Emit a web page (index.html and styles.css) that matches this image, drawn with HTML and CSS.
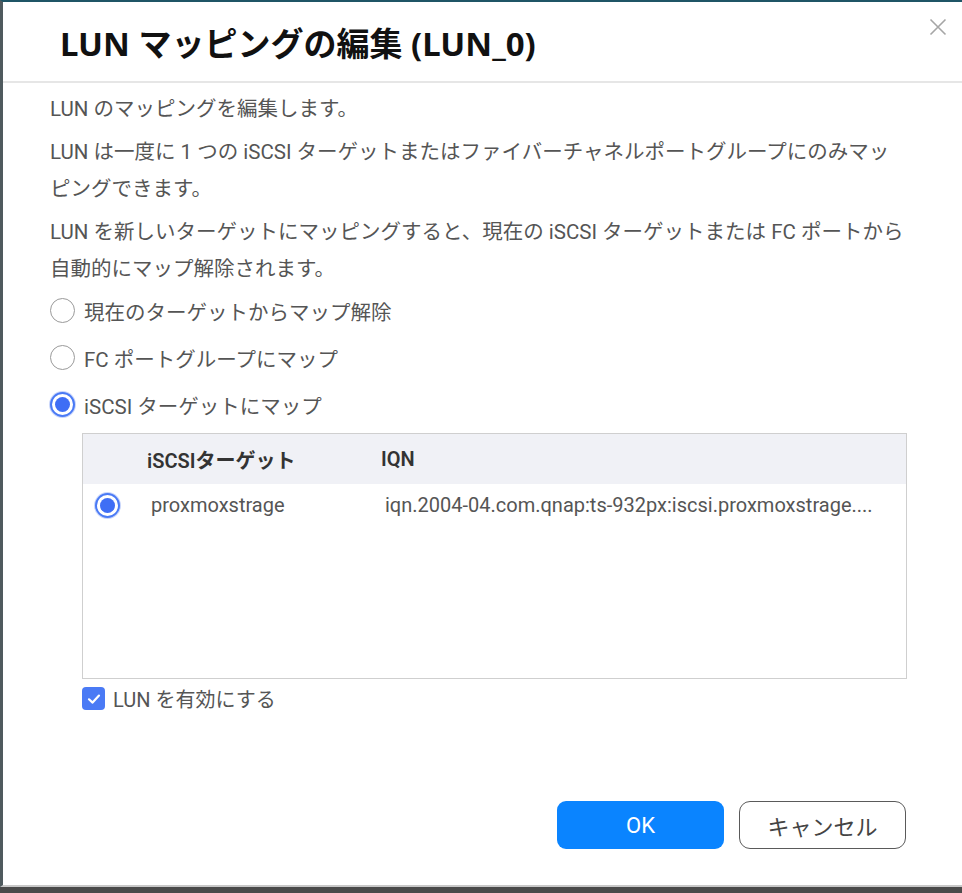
FILE: index.html
```html
<!DOCTYPE html>
<html lang="ja">
<head>
<meta charset="utf-8">
<title>LUN マッピングの編集</title>
<link rel="stylesheet" href="styles.css">
</head>
<body>
<div class="dialog">
  <header class="dialog-head">
    <h1 class="title">LUN マッピングの編集 (LUN_0)</h1>
    <button class="close" aria-label="閉じる">
      <svg width="18" height="18" viewBox="0 0 18 18"><path d="M1.5 1.5 L16.5 16.5 M16.5 1.5 L1.5 16.5" stroke="#a6a6a6" stroke-width="1.6" fill="none"/></svg>
    </button>
  </header>
  <main class="dialog-body">
    <p class="desc">LUN のマッピングを編集します。</p>
    <p class="desc">LUN は一度に 1 つの iSCSI ターゲットまたはファイバーチャネルポートグループにのみマッ<br>ピングできます。</p>
    <p class="desc">LUN を新しいターゲットにマッピングすると、現在の iSCSI ターゲットまたは FC ポートから<br>自動的にマップ解除されます。</p>

    <div class="options">
      <label class="option"><span class="radio"></span><span>現在のターゲットからマップ解除</span></label>
      <label class="option"><span class="radio"></span><span>FC ポートグループにマップ</span></label>
      <label class="option"><span class="radio checked"></span><span>iSCSI ターゲットにマップ</span></label>
    </div>

    <div class="grid">
      <div class="grid-head">
        <div class="c-sel"></div>
        <div class="c-name">iSCSIターゲット</div>
        <div class="c-iqn">IQN</div>
      </div>
      <div class="grid-row">
        <div class="c-sel"><span class="radio checked"></span></div>
        <div class="c-name cell">proxmoxstrage</div>
        <div class="c-iqn cell">iqn.2004-04.com.qnap:ts-932px:iscsi.proxmoxstrage....</div>
      </div>
    </div>

    <label class="check-line"><span class="checkbox"><svg width="16" height="16" viewBox="0 0 16 16"><path d="M3 8.3 L6.6 11.6 L13 4.6" stroke="#fff" stroke-width="2.2" fill="none" stroke-linecap="round" stroke-linejoin="round"/></svg></span><span>LUN を有効にする</span></label>
  </main>
  <footer class="dialog-foot">
    <button class="btn btn-primary">OK</button>
    <button class="btn btn-secondary">キャンセル</button>
  </footer>
</div>
</body>
</html>
```

FILE: styles.css
```css
* { box-sizing: border-box; }
html, body { margin: 0; padding: 0; }
body {
  width: 962px;
  height: 893px;
  background: #4a4a4a;
  font-family: Roboto, "Noto Sans CJK JP", sans-serif;
  color: #555;
  overflow: hidden;
}
.dialog {
  width: 962px;
  height: 887px;
  background: #fff;
  border-top: 2px solid #1f5566;
  border-left: 3px solid #4f5a5e;
  border-bottom: 2px solid #c8c8c8;
  display: flex;
  flex-direction: column;
}
.dialog-head {
  height: 81px;
  border-bottom: 2px solid #e6e6e6;
  display: flex;
  align-items: flex-start;
  justify-content: space-between;
  padding: 0 15px 0 57px;
}
.title {
  margin: 21px 0 0;
  font-family: "Noto Sans", "Noto Sans CJK JP", sans-serif;
  font-weight: 700;
  font-size: 33px;
  line-height: 42px;
  color: #111;
  letter-spacing: 0;
}
.close {
  margin-top: 16px;
  border: 0;
  background: none;
  padding: 0;
  width: 18px;
  height: 18px;
  cursor: pointer;
}
.dialog-body {
  flex: 1;
  padding: 8px 30px 0 47px;
  font-size: 20.5px;
}
.desc {
  margin: 0 0 6px;
  line-height: 37px;
  white-space: nowrap;
}
.options {
  display: flex;
  flex-direction: column;
  margin-top: -7px;
}
.option {
  height: 47px;
  display: flex;
  align-items: center;
  gap: 9px;
}
.radio {
  width: 25px;
  height: 25px;
  border-radius: 50%;
  border: 1.5px solid #9a9a9a;
  background: #fff;
  display: inline-block;
  flex: none;
  position: relative;
}
.radio.checked {
  border: 2px solid #4a7af5;
  box-shadow: 0 0 0 1px #c9d6fb;
}
.radio.checked::after {
  content: "";
  position: absolute;
  left: 3px; top: 3px;
  width: 15px; height: 15px;
  border-radius: 50%;
  background: #3f6ef5;
}
.grid {
  margin: 5px 0 0 32px;
  width: 825px;
  height: 246px;
  border: 1px solid #cfcfcf;
  font-size: 20px;
}
.grid-head {
  height: 50px;
  background: #f0f1f6;
  display: flex;
  align-items: center;
  font-weight: 600;
  color: #333;
}
.grid-row {
  height: 42px;
  display: flex;
  align-items: center;
}
.c-sel { width: 64px; flex: none; display: flex; padding-left: 12px; }
.c-name { width: 234px; flex: none; }
.c-iqn { flex: 1; min-width: 0; }
.cell { padding-left: 4px; }
.grid-row .c-iqn {
  white-space: nowrap;
}
.check-line {
  margin: 7px 0 0 32px;
  display: flex;
  align-items: center;
  gap: 8px;
  height: 25px;
  font-size: 20px;
}
.checkbox {
  width: 23px;
  height: 23px;
  border-radius: 4px;
  background: #4a7af5;
  display: flex;
  align-items: center;
  justify-content: center;
}
.dialog-foot {
  display: flex;
  justify-content: flex-end;
  gap: 15px;
  padding: 0 56px 36px 0;
}
.btn {
  width: 167px;
  height: 48px;
  font-family: Roboto, "Noto Sans CJK JP", sans-serif;
  font-size: 22px;
  cursor: pointer;
}
.btn-primary {
  background: #0a84ff;
  color: #fff;
  border: 0;
  border-radius: 9px;
}
.btn-secondary {
  background: #fff;
  color: #444;
  border: 1.5px solid #5a5a5a;
  border-radius: 11px;
}
```
